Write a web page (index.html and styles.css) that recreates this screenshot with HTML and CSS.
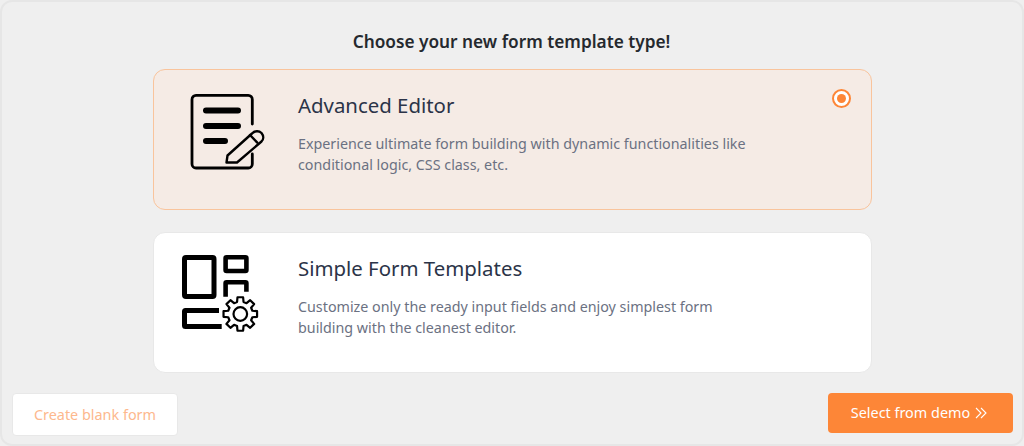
FILE: index.html
```html
<!DOCTYPE html>
<html lang="en">
<head>
<meta charset="utf-8">
<title>Choose template</title>
<link rel="stylesheet" href="styles.css">
</head>
<body>
<main class="panel">
  <h1 class="heading">Choose your new form template type!</h1>
  <section class="cards">
    <article class="card card-active">
      <div class="card-icon icon-a">
        <svg width="78" height="80" viewBox="0 0 78 80" fill="none" stroke="#000" stroke-linecap="round" stroke-linejoin="round">
          <path d="M64.300 32V7.400a4 4 0 0 0-4-4H8a4 4 0 0 0-4 4V72a4 4 0 0 0 4 4H60.300a4 4 0 0 0 4-4V62" stroke-width="2.800"/>
          <path d="M18 18.500H50M18 34H50M18 49H37" stroke-width="6"/>
          <path d="M38.500 70.500L39.500 63.500 64 41.500C67 38.500 71 38.500 73.500 41 76 44 75.500 47.500 73.500 49.500L49 70.500z" stroke-width="2.400"/>
          <path d="M62 43l7.300 7.700" stroke-width="2.400"/>
        </svg>
      </div>
      <div class="card-body">
        <h2 class="card-title">Advanced Editor</h2>
        <p class="card-text">Experience ultimate form building with dynamic functionalities like conditional logic, CSS class, etc.</p>
      </div>
      <span class="radio"></span>
    </article>
    <article class="card">
      <div class="card-icon icon-b">
        <svg width="78" height="78" viewBox="0 0 78 78" fill="none" stroke="#000" stroke-linejoin="round">
          <rect x="2.500" y="3.500" width="29.500" height="39" rx="1.500" stroke-width="5"/>
          <rect x="43.600" y="3.300" width="20.800" height="13.700" rx="1" stroke-width="4.600"/>
          <path d="M43.600 42.700V29.300a1 1 0 0 1 1-1H63.400a1 1 0 0 1 1 1V37.700" stroke-width="4.600"/>
          <path d="M37 56.500H3.500a1 1 0 0 0-1 1V71.500a1 1 0 0 0 1 1H39.700" stroke-width="5"/>
          <g transform="translate(58.300 60)" stroke-width="2.200">
            <polygon fill="#fff" points="-3.240,-12.070 -2.810,-16.770 2.810,-16.770 3.240,-12.070 6.250,-10.830 9.870,-13.840 13.840,-9.870 10.830,-6.250 12.070,-3.240 16.770,-2.810 16.770,2.810 12.070,3.240 10.830,6.250 13.840,9.870 9.870,13.840 6.250,10.830 3.240,12.070 2.810,16.770 -2.810,16.770 -3.240,12.070 -6.250,10.830 -9.870,13.840 -13.840,9.870 -10.830,6.250 -12.070,3.240 -16.770,2.810 -16.770,-2.810 -12.070,-3.240 -10.830,-6.250 -13.840,-9.870 -9.870,-13.840 -6.250,-10.830"/>
            <circle r="6.800"/>
          </g>
        </svg>
      </div>
      <div class="card-body">
        <h2 class="card-title">Simple Form Templates</h2>
        <p class="card-text">Customize only the ready input fields and enjoy simplest form building with the cleanest editor.</p>
      </div>
    </article>
  </section>
  <footer class="actions">
    <button class="btn btn-blank">Create blank form</button>
    <button class="btn btn-demo">Select from demo
      <svg class="chev" width="12" height="12" viewBox="0 0 12 12" fill="none" stroke="#fff" stroke-width="1.100"><path d="M1 1l5 5-5 5M6 1l5 5-5 5"/></svg>
    </button>
  </footer>
</main>
</body>
</html>
```

FILE: styles.css
```css
* { box-sizing: border-box; }
html, body { margin: 0; height: 100%; }
body { font-family: "Noto Sans", sans-serif; background: #efefef; overflow: hidden; }
.panel {
  width: 1024px; height: 446px;
  background: #efefef;
  border: 2px solid #e6e6e6;
  border-radius: 12px;
  padding: 27px 9px 0 10px;
  display: flex; flex-direction: column; align-items: center;
}
.heading {
  margin: 0 2px 15px 0;
  font-size: 17.250px; line-height: 25px; font-weight: 600;
  color: #25292e;
}
.cards { width: 719px; display: flex; flex-direction: column; gap: 22.500px; }
.card {
  position: relative;
  height: 140.500px;
  background: #fff;
  border: 1px solid #e8e8e8;
  border-radius: 12px;
  display: flex;
}
.card-active { background: #f5ebe5; border-color: #f9c49c; }
.card-icon { width: 144px; flex: none; }
.icon-a { padding: 22px 0 0 34px; }
.icon-b { padding: 21px 0 0 28px; }
.card-body { width: 460px; padding-top: 20px; }
.card-title { margin: 0 0 13px; font-size: 20.400px; line-height: 30px; font-weight: 400; color: #2b3448; }
.card-text { margin: 0; font-size: 14.300px; line-height: 21px; color: #6b7182; }
.radio {
  position: absolute; top: 19px; right: 20px;
  width: 19px; height: 19px; border-radius: 50%;
  border: 2px solid #fd8637;
  background: #fff;
  display: block;
}
.radio::after {
  content: ""; position: absolute; left: 3px; top: 3px;
  width: 9px; height: 9px; border-radius: 50%; background: #fd8637;
}
.actions { align-self: stretch; display: flex; justify-content: space-between; align-items: flex-start; margin-top: 20.500px; }
.btn { font-family: "Noto Sans", sans-serif; font-size: 14.400px; border-radius: 4px; cursor: pointer; }
.btn-blank { width: 166px; height: 43px; padding-top: 1px; background: #fff; border: 1px solid #e8e8e8; color: #fdb88d; }
.btn-demo { width: 185px; height: 39.500px; padding: 0 3px 0 0; background: #fd8637; border: 0; color: #fff; display: flex; align-items: center; justify-content: center; gap: 5px; }
.chev { flex: none; }
```
